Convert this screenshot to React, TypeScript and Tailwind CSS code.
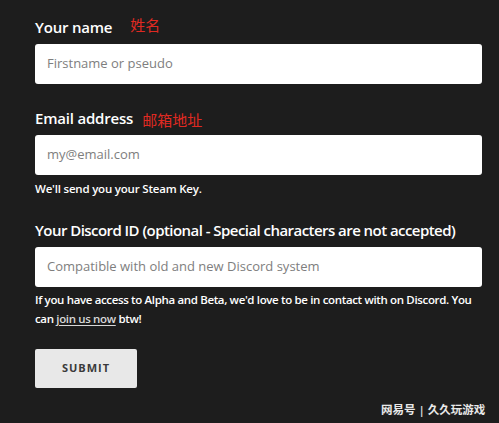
import React from "react";

const font = { fontFamily: '"Open Sans", "Noto Sans CJK SC", sans-serif' };

export default function App() {
  return (
    <div className="w-[499px] h-[423px] bg-[#1d1d1d] relative overflow-hidden" style={font}>
      <div className="pl-[35px] pr-[17px] pt-[17px] flex flex-col">
        <div className="flex items-center h-[20px]">
          <span className="text-white text-[15px] font-semibold tracking-[-0.2px]">Your name</span>
          <span className="text-[#e02a22] text-[15px] ml-[18px] -mt-[4px]">姓名</span>
        </div>
        <div className="mt-[7px] h-[40px] bg-white rounded-[3px] flex items-center pl-[12px] text-[13px] text-[#7e7e7e]">
          Firstname or pseudo
        </div>

        <div className="flex items-center h-[20px] mt-[24px]">
          <span className="text-white text-[15px] font-semibold tracking-[-0.2px]">Email address</span>
          <span className="text-[#e02a22] text-[15px] ml-[9px] mt-[4px]">邮箱地址</span>
        </div>
        <div className="mt-[7px] h-[40px] bg-white rounded-[3px] flex items-center pl-[12px] text-[13px] text-[#7e7e7e]">
          my@email.com
        </div>
        <div className="mt-[5px] text-white text-[11.5px] font-semibold tracking-[-0.2px] leading-[17px]">
          We'll send you your Steam Key.
        </div>

        <div className="flex items-center h-[20px] mt-[23px] whitespace-nowrap">
          <span className="text-white text-[15px] font-semibold tracking-[-0.55px]">
            Your Discord ID (optional - Special characters are not accepted)
          </span>
        </div>
        <div className="mt-[7px] h-[40px] bg-white rounded-[3px] flex items-center pl-[12px] text-[13px] text-[#7e7e7e]">
          Compatible with old and new Discord system
        </div>
        <div className="mt-[3px] text-white text-[11.5px] font-semibold tracking-[-0.35px] leading-[19px] w-[450px]">
          If you have access to Alpha and Beta, we'd love to be in contact with on Discord. You can{" "}
          <span className="underline underline-offset-2 text-[#d8d8d8]">join us now</span> btw!
        </div>

        <div className="mt-[21px] w-[102px] h-[39px] bg-[#e8e8e8] rounded-[2px] flex items-center justify-center text-[11px] font-bold tracking-[1px] text-[#3a3a3a]">
          SUBMIT
        </div>
      </div>
      <div className="absolute left-[381px] top-[401px] text-[11.5px] text-[#e8e8e8] font-semibold">
        网易号 | 久久玩游戏
      </div>
    </div>
  );
}
